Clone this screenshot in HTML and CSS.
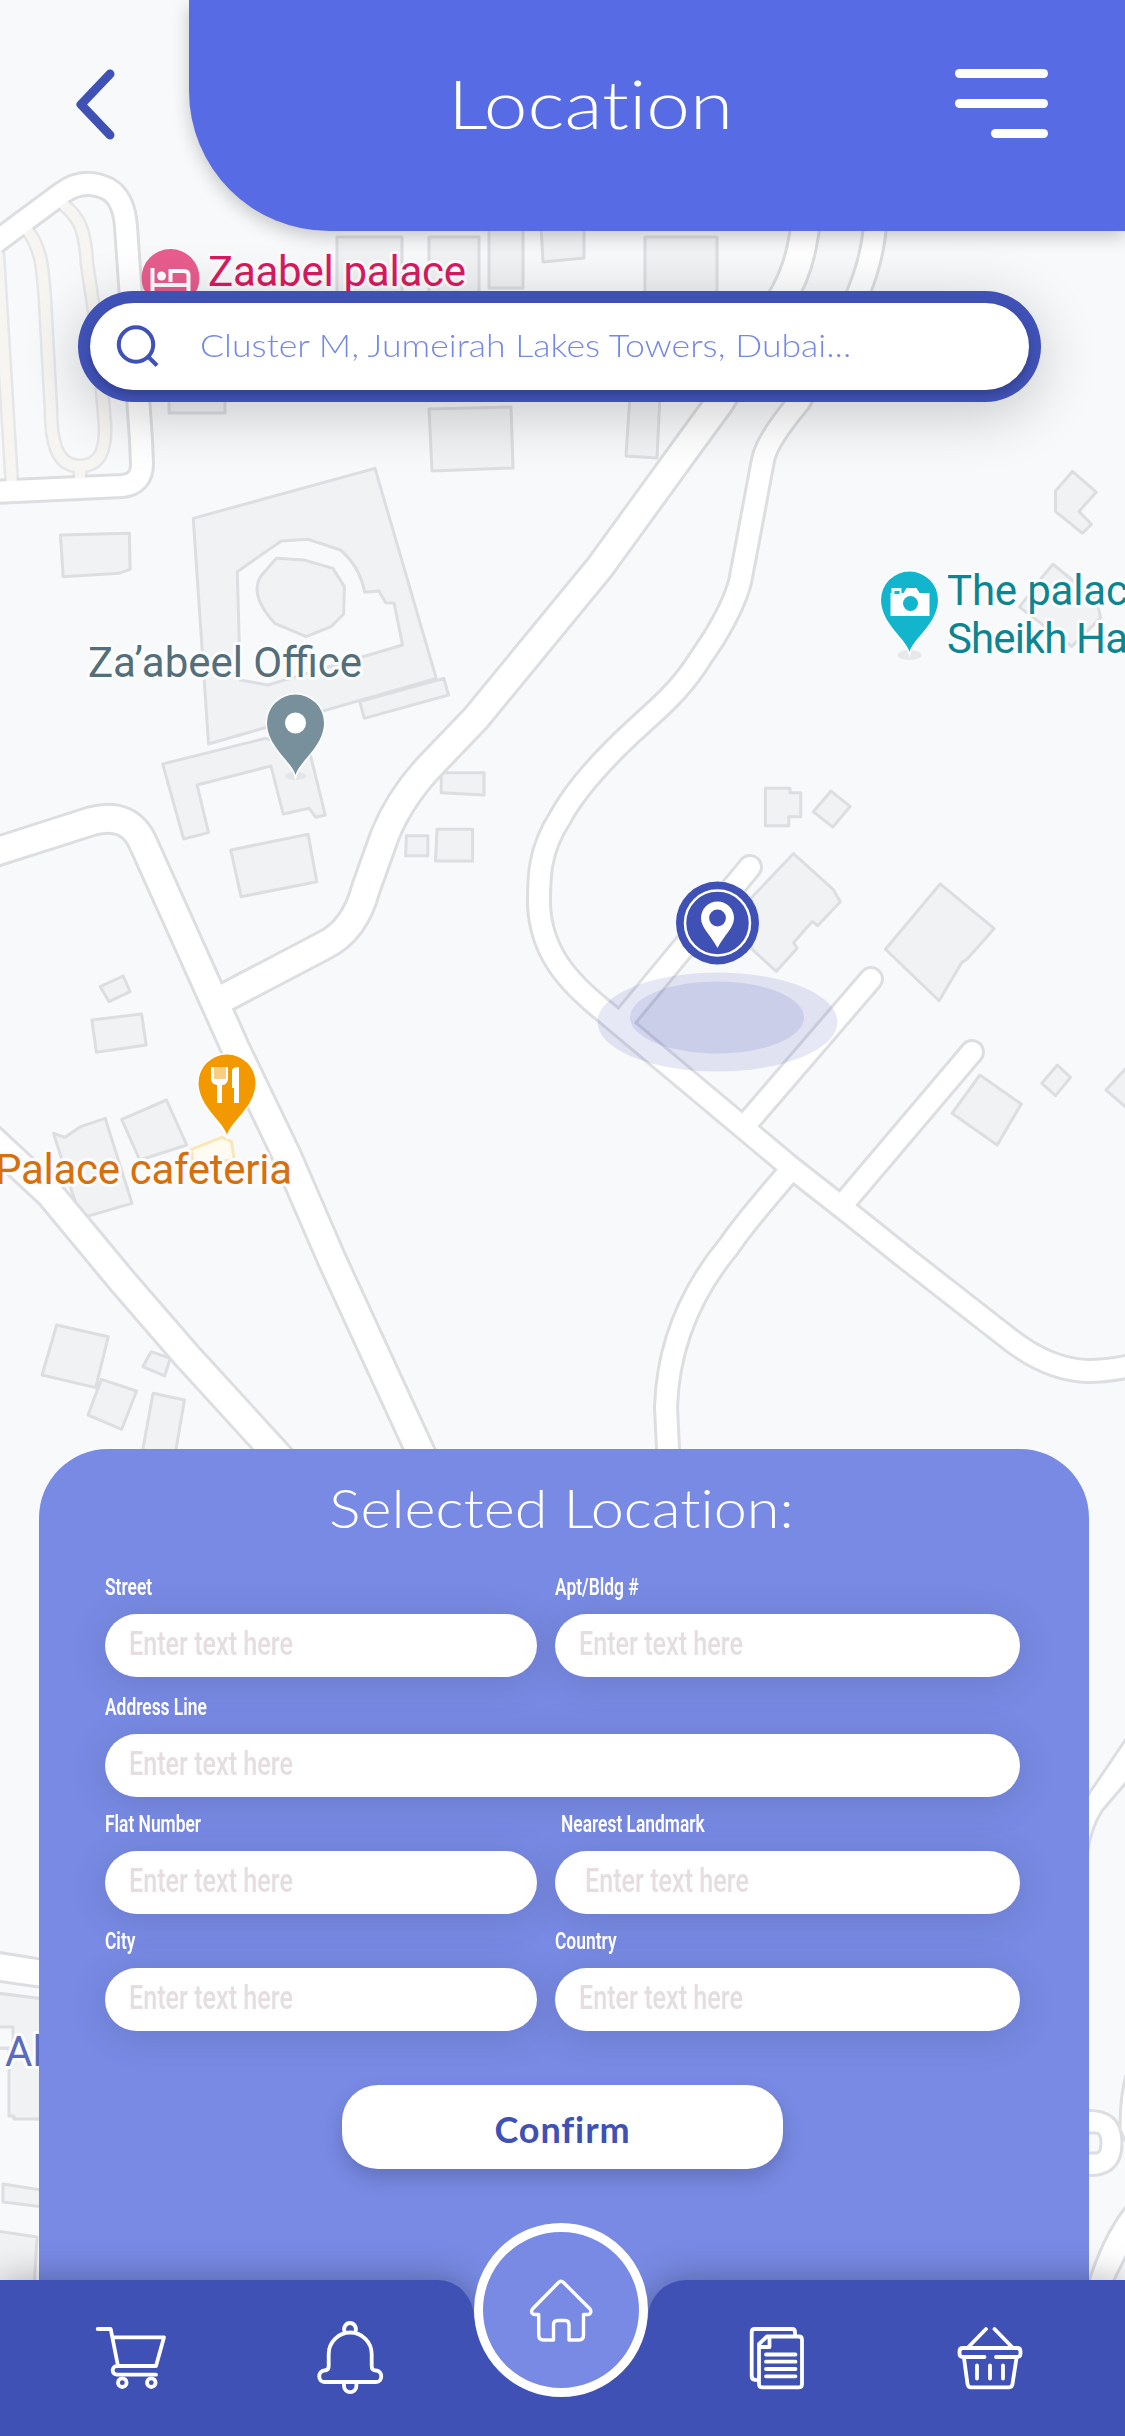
FILE: index.html
```html
<!DOCTYPE html>
<html lang="en">
<head>
<meta charset="utf-8">
<title>Location</title>
<link rel="stylesheet" href="styles.css">
</head>
<body>
<div class="screen">
  <svg class="map" viewBox="0 0 1125 2436" aria-hidden="true">
    <defs>
      <path id="pin" d="M0 52C-4 38-28 24-28.500 0A28.500 28.500 0 0 1 28.500 0C28 24 4 38 0 52Z"/>
      <g id="service-roads">
        <path d="M-2 255L12 486M27 230C42 248 43 272 45 300L51 410C51 440 56 465 78 466S106 450 105 425L97 330 87 264C85 227 78 217 64 205M80 466V484"/>
      </g>
      <g id="roads-wide">
        <path d="M-8 853L92 821Q130 811 144 845L206 983 237 1052 287 1156 332 1260 425 1462"/>
        <path d="M812 190L803 240Q798 272 780 302L720 402 682 454 600 567 476 718 430 766Q400 798 385 835L366 888Q355 930 325 945L222 999"/>
        <path d="M-10 1138L50 1194 123 1282 188 1357 284 1462"/>
      </g>
      <g id="roads-narrow">
        <path d="M-8 245L62 193Q84 177 108 189Q124 198 126 227L141 440 142 464Q142 484 122 486L-8 492"/>
        <path d="M879 190L874 235Q868 285 832 345L799 402Q767 440 763 460L748 540 740 582Q734 605 714 638L694 668C670 703 640 722 609 755Q575 790 560 818C538 852 539 880 539 905C541 950 565 980 604 1011L788 1165 853 1216 903 1256 1012 1341Q1050 1370 1088 1371Q1110 1371 1135 1365"/>
        <path d="M750 867L620 1024M871 979L748 1122M972 1052L844 1203M788 1173Q743 1225 729 1246C690 1293 668 1345 666 1407L669 1470"/>
      </g>
    </defs>

    <g class="building">
      <path d="M337 300V237H402V300ZM429 300V237H479V300ZM489 225H523V288H489ZM541 225H584V258L543 262ZM645 237H717V300H645ZM169 395H225V413H169ZM429 409L511 407 513 468 432 471ZM630 395H660L657 458 626 456Z"/>
    </g>
    <g class="building" transform="translate(0 440) scale(2.613 3) scale(.14645 .11111)">
      <path d="M158 285L338 280 340 388 310 400 165 410ZM505 235L980 85 1140 715 545 912Z"/>
      <path d="M940 785L1160 715 1172 765 952 835ZM425 972L695 895 810 940 850 1125 825 1132 808 1105 740 1122 708 978 515 1035 545 1178 480 1197ZM603 1230L805 1183 828 1325 630 1370ZM1153 998H1265V1065L1153 1058ZM1062 1187H1118V1247H1060ZM1142 1168H1235V1263H1138Z"/>
      <path class="yard" d="M620 395L735 303 805 298 890 330Q940 380 953 457L990 453 1008 488 1030 490 1052 615 700 735 628 720Z"/>
      <path d="M722 355L795 360 870 385 900 440 898 522 865 560 800 590 718 550Q650 465 682 408Z"/>
    </g>
    <g class="building" transform="translate(560 400) scale(.36036 .35714)">
      <path d="M1375 255L1422 200 1488 258 1440 312 1475 348 1450 373 1375 312ZM1335 500L1368 460 1490 560 1500 610 1420 690 1275 580ZM570 1087H638V1100H668V1167H635V1192H570ZM703 1153L752 1095 805 1138 757 1196ZM530 1395L648 1270 758 1370 778 1405 715 1472 700 1460 648 1520 658 1535 600 1600 530 1535ZM903 1538L1055 1355 1205 1480 1130 1565 1115 1575 1052 1682Z"/>
    </g>
    <g class="building" transform="translate(0 940) scale(.3827 .33333)">
      <path d="M262 140L322 108 340 155 285 185ZM240 240L370 222 382 315 252 337ZM140 580L170 592 210 560 275 535 345 790 210 835ZM318 538L435 480 488 615 365 660ZM148 1155L283 1190 250 1343 110 1305ZM395 1235L445 1255 430 1308 373 1280ZM265 1318L357 1353 318 1468 230 1425ZM400 1360L482 1380 455 1560 368 1560Z"/>
      <path class="cafe" d="M500 628L580 592 605 605 612 660 505 670Z"/>
    </g>
    <g class="building" transform="translate(560 940) scale(.36036 .33333)">
      <path d="M1165 405L1280 492 1213 615 1088 520ZM1380 375L1417 412 1375 467 1337 430ZM1600 350L1515 450 1600 530Z"/>
    </g>
    <g class="building">
      <path d="M-3 1993L60 2001V2119H14V2116H9V2048H-3ZM3 2184L60 2193V2209L3 2202ZM-3 2231L37 2237 34 2290H-3Z"/>
      <path class="yard" d="M-3 2027H13V2048H-3Z"/>
    </g>

    <use href="#service-roads" class="edge edge-service"/>
    <use href="#roads-narrow" class="edge edge-narrow"/>
    <use href="#roads-wide" class="edge edge-wide"/>
    <use href="#service-roads" class="fill-service"/>
    <use href="#roads-narrow" class="fill-narrow"/>
    <use href="#roads-wide" class="fill-wide"/>
    <g class="road-piece">
      <path d="M-4 1952L60 1962V1990L-4 1981ZM1080 1807L1130 1733V1778L1102 1811Q1091 1828 1087 1855ZM1130 2065Q1120 2085 1120 2130L1130 2150ZM1080 2111Q1122 2106 1122 2143T1080 2175ZM1130 2202Q1105 2230 1088 2284H1112L1130 2248Z"/>
      <path class="loop-core" d="M1080 2133H1096Q1101 2133 1101 2143T1096 2153H1080Z"/>
    </g>

    <g class="labels">
      <text x="208" y="286" fill="#d81b60" textLength="258">Zaabel palace</text>
      <text x="88" y="677" fill="#546e7a" textLength="274">Za’abeel Office</text>
      <text x="947" y="605" fill="#0d8591" textLength="181">The palac</text>
      <text x="947" y="653" fill="#0d8591" textLength="181">Sheikh Ha</text>
      <text x="-5" y="1184" fill="#d5700c" textLength="297">Palace cafeteria</text>
      <text x="5" y="2066" fill="#5c6bc0">Al</text>
    </g>

    <g transform="translate(170.500 278)">
      <circle r="29" fill="#e85d8e"/>
      <path d="M-18-10V20M-18 7H18V20M18 7V-3Q18-7 13-7H0V4" fill="none" stroke="#fff" stroke-width="4"/>
      <circle cx="-9" cy="-2" r="4.500" fill="#fff"/>
    </g>
    <ellipse cx="295.500" cy="776" rx="11" ry="4" fill="#e4e5e7"/>
    <g transform="translate(295.500 723)">
      <use href="#pin" fill="#78909c" stroke="#fff" stroke-width="3" paint-order="stroke"/>
      <circle r="10.500" fill="#fff"/>
    </g>
    <ellipse cx="909.500" cy="655" rx="12" ry="5" fill="#e7e8ea"/>
    <g transform="translate(909.500 600)">
      <use href="#pin" fill="#12b5cb" stroke="#fff" stroke-width="3" paint-order="stroke"/>
      <path d="M-19-7H-6L-3-12H7L10-7H20V16H-19Z" fill="#fff"/>
      <circle cx="1" cy="3.500" r="7.500" fill="#12b5cb"/>
      <rect x="-18" y="-12" width="10" height="8" fill="#e3f7f9"/>
      <rect x="-15" y="-9" width="5" height="3" fill="#12b5cb"/>
    </g>
    <g transform="translate(227 1083)">
      <use href="#pin" fill="#f29900" stroke="#fff" stroke-width="3" paint-order="stroke"/>
      <path d="M-16-16H1V-4Q0 2-5 2V20H-10V2Q-16 1-16-4ZM5-13Q6-16 12-16V20H7V5H5Z" fill="#fff"/>
      <path d="M-13-16H-1V-4H-13Z" fill="#f8ce85"/>
    </g>

    <ellipse cx="717.500" cy="1022" rx="120" ry="49.500" fill="#3f51b5" opacity=".13"/>
    <ellipse cx="717" cy="1017.500" rx="87" ry="36" fill="#3f51b5" opacity=".13"/>
    <g transform="translate(717.500 923)">
      <circle r="41.500" fill="#3f51b5"/>
      <circle r="32.500" fill="none" stroke="#fff" stroke-width="2.500"/>
      <path d="M0 25C-6 13-16.500 5-16.500-5A16.500 16.500 0 0 1 16.500-5C16.500 5 6 13 0 25Z" fill="#fff"/>
      <circle cy="-5" r="8.400" fill="#3f51b5"/>
    </g>
  </svg>

  <header class="topbar">
    <button class="back" aria-label="Back">
      <svg width="40" height="72" viewBox="0 0 40 72"><path d="M35 6L6 36.500 35 67"/></svg>
    </button>
    <div class="title-panel">
      <h1><span class="title-text">Location</span></h1>
      <div class="menu"><i></i><i></i><i class="short"></i></div>
    </div>
  </header>

  <div class="search">
    <div class="search-inner">
      <svg class="search-icon" width="46" height="46" viewBox="0 0 46 46"><circle cx="22" cy="20.500" r="17.200"/><path d="M34 32.500L43 41.500"/></svg>
      <span class="search-text">Cluster M, Jumeirah Lakes Towers, Dubai...</span>
    </div>
  </div>

  <main class="sheet">
    <h2><span class="sheet-title">Selected Location:</span></h2>
    <form class="form">
      <div class="field"><label><span>Street</span></label><div class="input"><span>Enter text here</span></div></div>
      <div class="field"><label><span>Apt/Bldg #</span></label><div class="input"><span>Enter text here</span></div></div>
      <div class="field wide"><label><span>Address Line</span></label><div class="input"><span>Enter text here</span></div></div>
      <div class="field"><label><span>Flat Number</span></label><div class="input"><span>Enter text here</span></div></div>
      <div class="field inset"><label><span>Nearest Landmark</span></label><div class="input"><span>Enter text here</span></div></div>
      <div class="field"><label><span>City</span></label><div class="input"><span>Enter text here</span></div></div>
      <div class="field"><label><span>Country</span></label><div class="input"><span>Enter text here</span></div></div>
    </form>
    <button class="confirm">Confirm</button>
  </main>

  <nav class="tabbar">
    <svg class="tabbar-shape" viewBox="0 0 1125 156"><path d="M0 0H438A36 38 0 0 1 474 38H648A38 38 0 0 1 686 0H1125V156H0Z"/></svg>
    <svg class="icons" viewBox="0 2280 1125 156">
      <g class="cart">
        <path d="M97.700 2329H110.700L118 2366H156L164 2337.300H113.500M118 2366H117A4.300 4.300 0 0 0 117 2374.700H156"/>
        <circle cx="122.300" cy="2382.700" r="4.300"/><circle cx="151.300" cy="2382.700" r="4.300"/>
      </g>
      <g class="bell">
        <path d="M344.500 2331.500C343 2327 346 2323 350 2323S357 2327 355.500 2331.500M328.700 2366V2354A21.500 21.500 0 0 1 371.700 2354V2366Q371.700 2370.500 376 2370.500C383 2371 383 2382 376 2382H324.500C317.500 2382 317.500 2371 324.500 2370.500Q328.700 2370.500 328.700 2366ZM344 2383V2386A6.200 6.200 0 0 0 356.400 2386V2383"/>
      </g>
      <g class="docs">
        <path d="M795 2336V2332Q795 2329 792 2329H755Q751.700 2329 751.700 2332V2376Q751.700 2380 756 2380M767 2336.500H799Q802 2336.500 802 2340V2384Q802 2387.300 799 2387.300H762Q759 2387.300 759 2384V2344L767 2336.500M769.500 2337V2347H759M766 2354.500H795.500M766 2361.700H795.500M766 2369H795.500M766 2376.300H795.500"/>
      </g>
      <g class="basket">
        <path d="M986 2329L968 2347.500M994.500 2329L1012.500 2347.500M984.500 2357H963Q959.500 2357 959.500 2353.500V2351.500Q959.500 2348 963 2348H1017Q1020.500 2348 1020.500 2351.500V2353.500Q1020.500 2357 1017 2357H996M964 2358L967.500 2384Q968 2387.300 971 2387.300H1009Q1012 2387.300 1012.500 2384L1016.500 2358M977 2365.500V2378.500M990 2365.500V2378.500M1003 2365.500V2378.500"/>
      </g>
    </svg>
    <div class="home">
      <svg width="66" height="66" viewBox="528 2277 66 66"><path d="M558.500 2282.500Q561 2280 563.500 2282.500L590 2309C592 2312 590 2315 587 2314.500H583.500V2335Q583.500 2340 579 2340H569V2325Q569 2320.500 565 2320.500H557.500Q553.500 2320.500 553.500 2325V2340H543.500Q538.700 2340 538.700 2335V2314.500H535.500C532 2315 530.500 2312 532.500 2309Z"/></svg>
    </div>
  </nav>
</div>
</body>
</html>
```
FILE: styles.css
```css
* { box-sizing: border-box; }
body { margin: 0; font-family: Lato, "Liberation Sans", sans-serif; font-variant-ligatures: none; }
button { border: 0; padding: 0; margin: 0; background: none; font: inherit; }
h1, h2 { margin: 0; font-weight: 300; color: #fff; }

.screen {
  position: relative;
  width: 1125px;
  height: 2436px;
  display: flex;
  flex-direction: column;
  overflow: hidden;
  background: #f8f9fb;
}

/* Map */
.map { position: absolute; inset: 0; width: 1125px; height: 2436px; }
.building path { fill: #f1f2f4; stroke: #dddee1; stroke-width: 3; vector-effect: non-scaling-stroke; stroke-linejoin: round; }
.building .yard { fill: #f8f9fb; }
.building .cafe { fill: #fffbf0; stroke: #fbe7b5; }
.edge, .fill-service, .fill-narrow, .fill-wide { fill: none; stroke-linecap: round; stroke-linejoin: round; }
.edge { stroke: #dddee1; }
.edge-service { stroke: #e5e6e7; stroke-width: 15px; }
.edge-narrow { stroke-width: 26px; }
.edge-wide { stroke-width: 32px; }
.fill-service { stroke: #f6f5f2; stroke-width: 10px; }
.fill-narrow { stroke: #fff; stroke-width: 20px; }
.fill-wide { stroke: #fff; stroke-width: 26px; }
.road-piece path { fill: #fff; stroke: #dddee1; stroke-width: 3; }
.road-piece .loop-core { fill: #f8f9fb; }
.labels { font: 42px Roboto, sans-serif; paint-order: stroke; stroke: #fbfcfd; stroke-width: 6px; stroke-linejoin: round; }

/* Header */
.topbar { position: relative; display: flex; height: 231px; }
.back { width: 189px; height: 208px; display: flex; align-items: center; justify-content: center; padding-left: 1px; }
.back svg { fill: none; stroke: #3f51b5; stroke-width: 9px; stroke-linecap: round; stroke-linejoin: round; }
.title-panel {
  flex: 1;
  display: flex;
  justify-content: space-between;
  padding: 69px 77px 0 259px;
  background: #576ce4;
  border-bottom-left-radius: 140px;
  box-shadow: 0 6px 18px rgba(0, 0, 0, .2);
}
h1 { font-size: 67px; line-height: 68px; }
.title-text { display: inline-block; transform: scaleX(1.17); transform-origin: left; white-space: nowrap; }
.menu { display: flex; flex-direction: column; align-items: flex-end; gap: 21px; }
.menu i { width: 93px; height: 9px; border-radius: 5px; background: #fff; }
.menu .short { width: 57px; }

/* Search */
.search {
  position: relative;
  width: 963px;
  height: 111px;
  margin: 60px 0 0 78px;
  padding: 12px;
  border-radius: 56px;
  background: #3f51b5;
  box-shadow: 0 12px 60px rgba(0, 0, 0, .2);
}
.search-inner {
  display: flex;
  align-items: center;
  height: 87px;
  padding-left: 24px;
  border-radius: 44px;
  background: #fff;
  box-shadow: 0 5px 9px rgba(0, 0, 0, .2);
}
.search-icon { fill: none; stroke: #3f51b5; stroke-width: 4px; }
.search-text { margin-left: 40px; padding-bottom: 4px; font-size: 32px; font-weight: 300; color: #7488e4; transform: scaleX(1.113); transform-origin: left; white-space: nowrap; }

/* Bottom sheet; its foot runs behind the curve of the tab bar */
.sheet {
  position: relative;
  flex: none;
  width: 1050px;
  height: 875px;
  margin: 1047px 0 -44px 39px;
  padding: 30px 69px 0 66px;
  border-radius: 69px 69px 0 0;
  background: #788ae4;
}
h2 { height: 60px; padding-left: 224px; font-size: 53px; line-height: 57px; }
.sheet-title { display: inline-block; transform: scaleX(1.12); transform-origin: left; white-space: nowrap; }
.form { display: grid; grid-template-columns: 432px 465px; column-gap: 18px; padding-top: 33px; }
.field { height: 117px; }
.field:nth-child(-n+2) { height: 120px; }
.wide { grid-column: 1 / -1; }
label { display: block; height: 42px; font: 600 24.500px/30px Roboto, sans-serif; color: #fff; }
label span { display: inline-block; transform: scaleX(.71); transform-origin: left; white-space: nowrap; }
.input {
  height: 63px;
  padding-left: 24px;
  border-radius: 32px;
  background: #fff;
  box-shadow: 0 5px 40px rgba(0, 0, 0, .12);
  font: 500 33px/60px Roboto, sans-serif;
  color: #e5dde0;
}
.input span { display: inline-block; transform: scaleX(.762); transform-origin: left; white-space: nowrap; }
.inset label { padding-left: 6px; }
.inset .input { padding-left: 30px; }
.confirm {
  display: block;
  width: 441px;
  height: 84px;
  margin: 42px 0 0 237px;
  padding-top: 3px;
  border-radius: 36px;
  background: #fff;
  box-shadow: 0 9px 20px rgba(0, 0, 0, .17);
  font-size: 36px;
  font-weight: 700;
  letter-spacing: .9px;
  color: #3f51b5;
}

/* Tab bar */
.tabbar { position: relative; height: 156px; }
.tabbar-shape { position: absolute; inset: 0; width: 1125px; height: 156px; overflow: visible; fill: #3f51b5; filter: drop-shadow(0 0 18px rgba(0, 0, 0, .3)); }
.icons { position: absolute; inset: 0; width: 1125px; height: 156px; fill: none; stroke: #fff; stroke-width: 3.8px; stroke-linecap: round; stroke-linejoin: round; }
.home {
  position: absolute;
  left: 474px;
  top: -57px;
  width: 174px;
  height: 174px;
  border: 9px solid #fff;
  border-radius: 50%;
  background: #788ae4;
  display: flex;
  align-items: center;
  justify-content: center;
}
.home svg { fill: none; stroke: #fff; stroke-width: 3.4px; stroke-linejoin: round; }
```
